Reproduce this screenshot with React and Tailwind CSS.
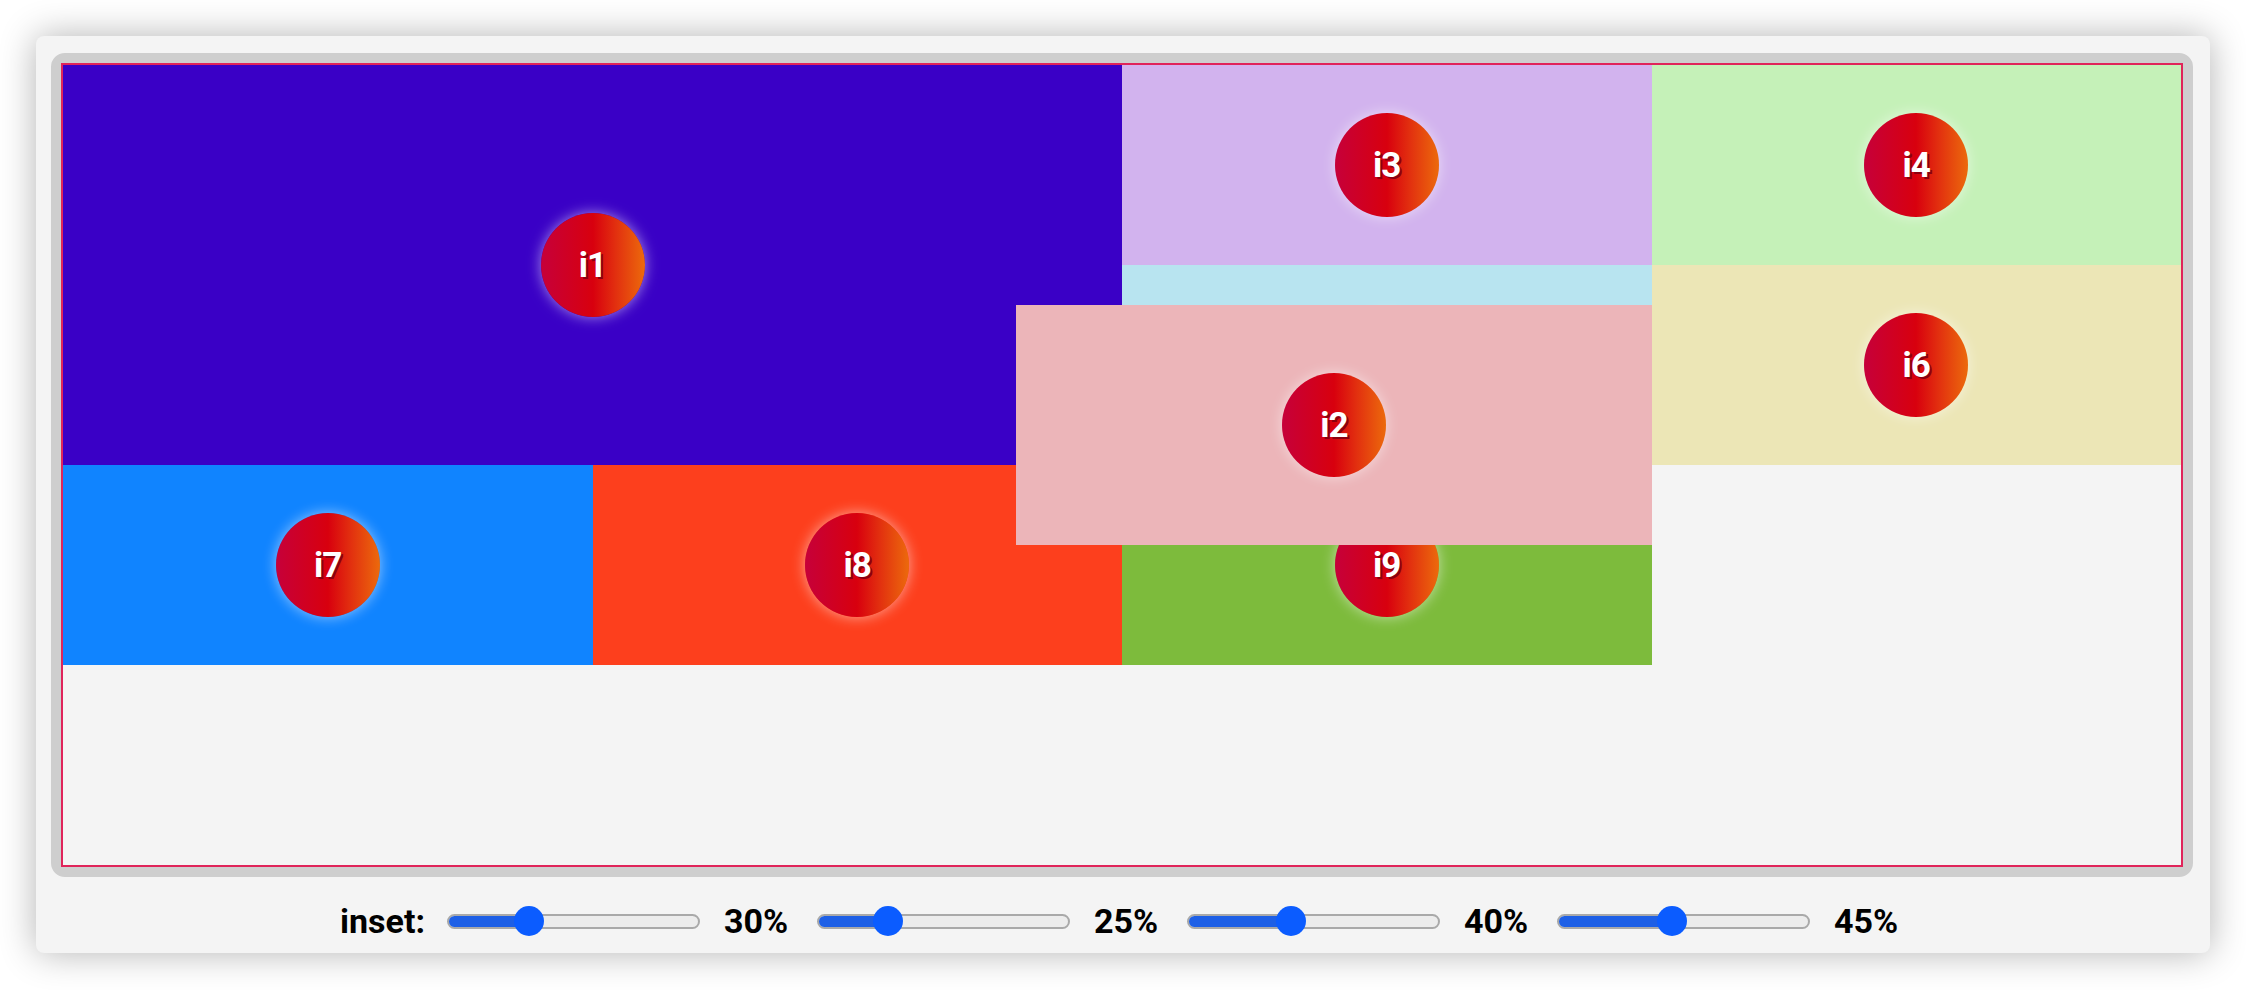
import { useState } from 'react';

const FONT = "font-['Roboto','Liberation_Sans',sans-serif]";

const cells = [
  { id: 'i1', bg: 'bg-[#3a00c6]', span: 'col-span-2 row-span-2' },
  { id: 'i3', bg: 'bg-[#d2b3ee]' },
  { id: 'i4', bg: 'bg-[#c5f1b8]' },
  { id: 'i5', bg: 'bg-[#b8e4f0]' },
  { id: 'i6', bg: 'bg-[#ece6b6]' },
  { id: 'i7', bg: 'bg-[#1084ff]' },
  { id: 'i8', bg: 'bg-[#fd3f1d]' },
  { id: 'i9', bg: 'bg-[#7dbb3c]' },
];

function Badge({ label }) {
  return (
    <div className="w-[104px] h-[104px] rounded-full flex items-center justify-center bg-[linear-gradient(to_right,#c6003a,#d8000e_50%,#e2300f_72%,#ec6a0c)] shadow-[0_0_14px_rgba(255,255,255,0.55)]">
      <span className={`${FONT} text-white font-bold text-[35px] leading-none tracking-[-1px] [text-shadow:2px_2px_0_#8c0010]`}>{label}</span>
    </div>
  );
}

function Slider({ value, onChange }) {
  // thumb is 30px, so its centre runs from 15px to width-15px
  const pos = 15 + (223 * value) / 100;
  return (
    <div className="relative w-[253px] h-[30px] flex items-center">
      <div className="relative w-full h-[15px] rounded-full border-2 border-[#a9a9a9] bg-[#ececec] overflow-hidden">
        <div className="h-full bg-[#1d5fe6]" style={{ width: pos }} />
      </div>
      <div className="absolute top-0 w-[30px] h-[30px] rounded-full bg-[#0b5cff]" style={{ left: pos - 15 }} />
      <input
        type="range"
        min="0"
        max="100"
        value={value}
        onChange={e => onChange(Number(e.target.value))}
        className="absolute inset-0 w-full h-full opacity-0 cursor-pointer"
      />
    </div>
  );
}

export default function App() {
  const [inset, setInset] = useState([30, 25, 40, 45]);

  const setAt = (i) => (v) => setInset(prev => prev.map((x, j) => (j === i ? v : x)));

  return (
    <div className="min-h-screen bg-white pt-[36px] pl-[36px]">
      <div className="w-[2174px] bg-[#f4f4f4] rounded-[8px] shadow-[0_0_36px_rgba(0,0,0,0.3)] pt-[17px] pl-[15px] pr-[17px] pb-[14px]">
        <div className="border-[10px] border-[#cecece] rounded-[14px]">
          <div className="relative border-2 border-[#e0245a] bg-[#f4f4f4] grid grid-cols-4 grid-rows-[repeat(4,200px)]">
            {cells.map(c => (
              <div key={c.id} className={`${c.bg} ${c.span || ''} flex items-center justify-center`}>
                <Badge label={c.id} />
              </div>
            ))}
            <div
              className="absolute bg-[#ecb5b9] flex items-center justify-center"
              style={{ top: `${inset[0]}%`, right: `${inset[1]}%`, bottom: `${inset[2]}%`, left: `${inset[3]}%` }}
            >
              <Badge label="i2" />
            </div>
          </div>
        </div>

        <div className={`${FONT} mt-[26px] h-[36px] flex items-center justify-center text-[34px] font-bold text-black`}>
          <span className="mr-[22px]">inset:</span>
          {inset.map((v, i) => (
            <div key={i} className="flex items-center">
              <Slider value={v} onChange={setAt(i)} />
              <span className={`ml-[24px] w-[70px] ${i < 3 ? 'mr-[23px]' : ''}`}>{v}%</span>
            </div>
          ))}
        </div>
      </div>
    </div>
  );
}
